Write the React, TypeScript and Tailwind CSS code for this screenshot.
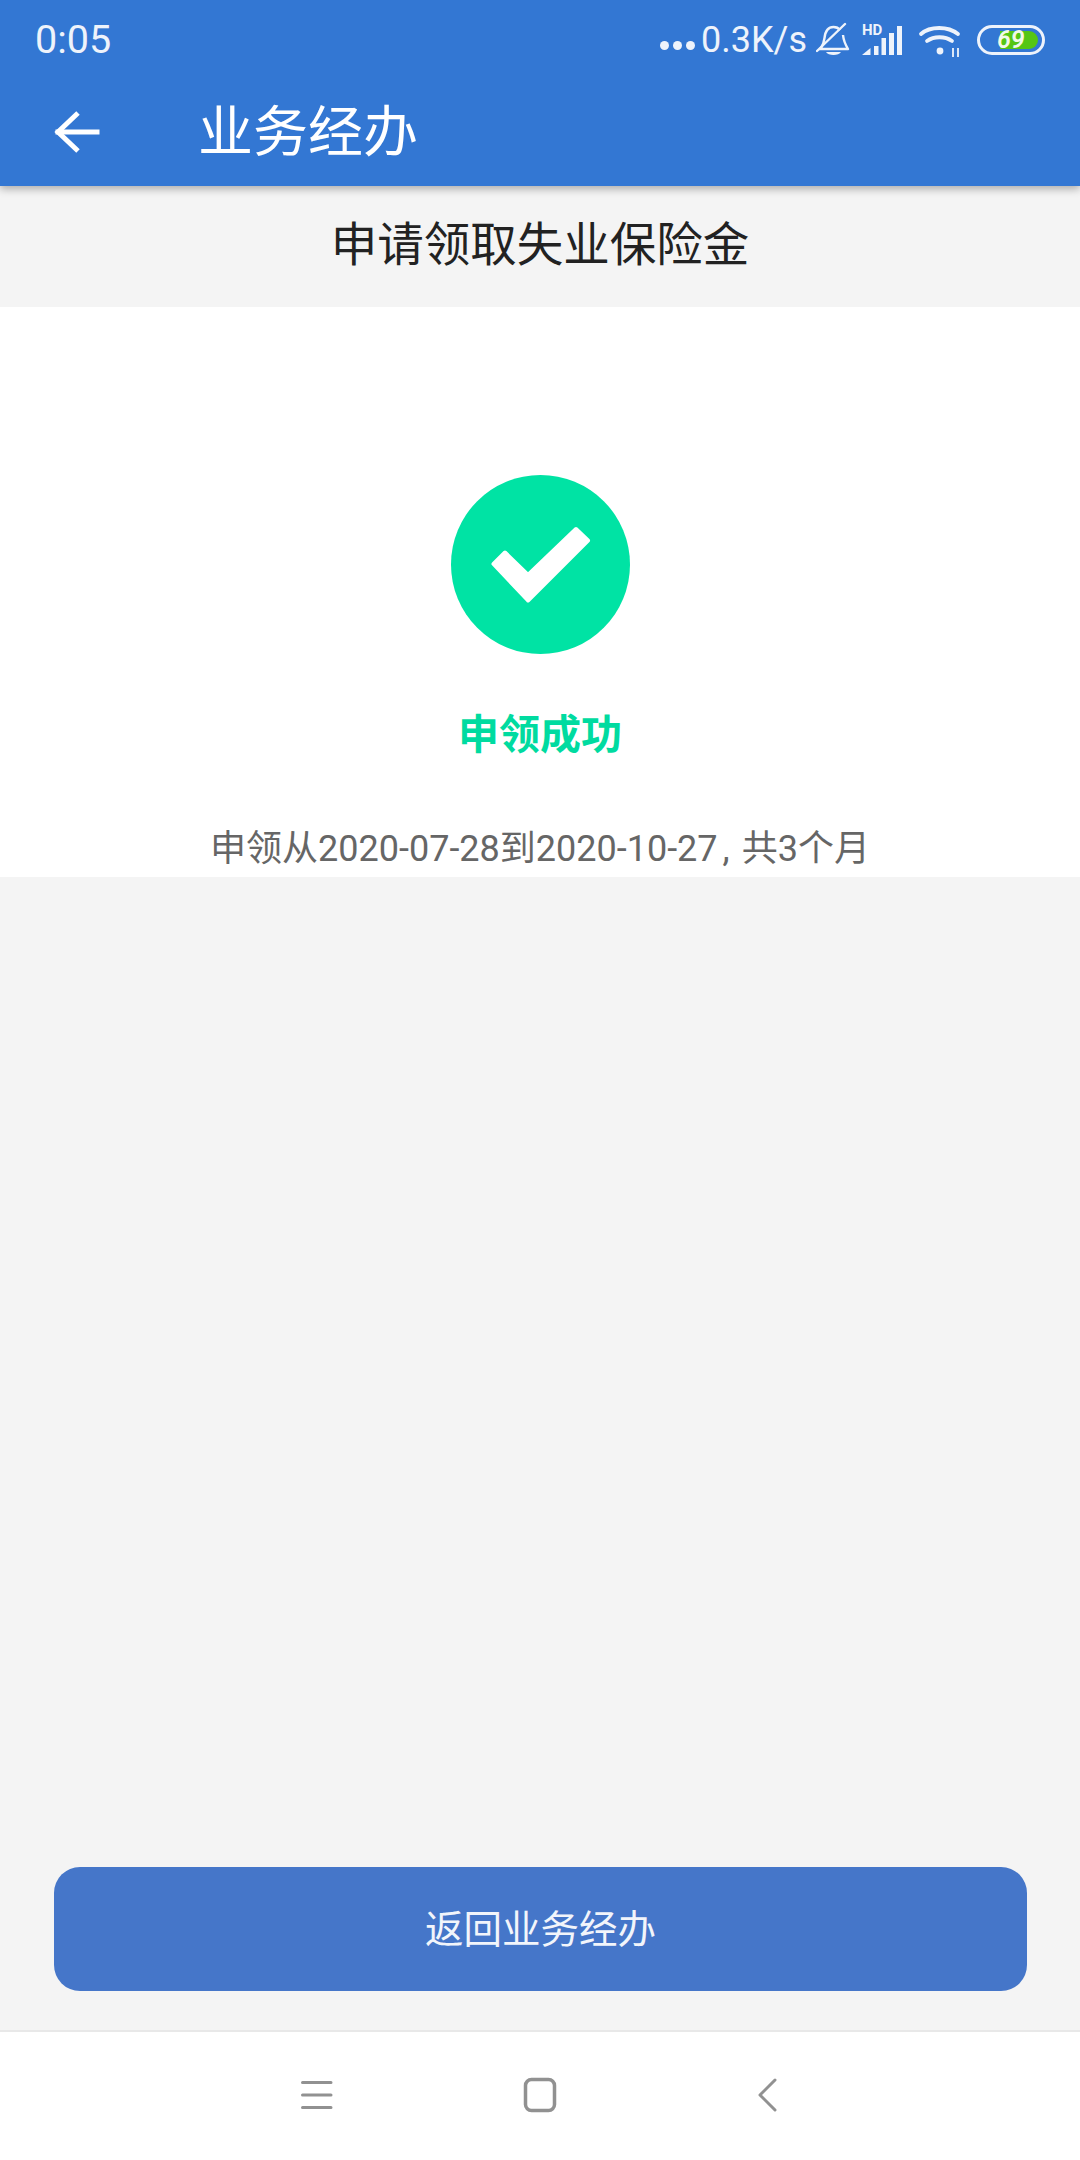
const cjk = "font-['Roboto','Noto_Sans_CJK_SC',sans-serif]";

function StatusBar() {
  return (
    <div className="flex h-[80px] items-center justify-between pl-[35px] pr-[35px] text-[#eef3fb]">
      <span className="text-[39.500px] leading-none">0:05</span>
      <div className="flex items-center">
        <div className="mr-[3px] mt-[10px] flex gap-[4px]">
          <span className="h-[9px] w-[9px] rounded-full bg-[#eef3fb]" />
          <span className="h-[9px] w-[9px] rounded-full bg-[#eef3fb]" />
          <span className="h-[9px] w-[9px] rounded-full bg-[#eef3fb]" />
        </div>
        <span className="ml-[3px] text-[36px] leading-none">0.3K/s</span>
        {/* muted bell */}
        <svg className="ml-[9px] h-[36px] w-[34px]" viewBox="0 0 34 36" fill="none" stroke="#eef3fb" strokeWidth="2.400">
          <path d="M5 26c2-3 3-6 3.500-10 .8-7 4-11 9-11 3 0 5 1 6.500 3M27 13c.5 5 2 9 5 14H3" strokeLinejoin="round" />
          <path d="M1 29 L29 2" strokeLinecap="round" />
          <path d="M10 30c2 4 13 4 15 0z" fill="#eef3fb" stroke="none" />
        </svg>
        {/* HD + signal */}
        <div className="relative ml-[12px] h-[32px] w-[41px]">
          <svg className="h-full w-full" viewBox="0 0 41 32" fill="#eef3fb">
            <path d="M0 31 L8.500 24 V31 Z" />
            <rect x="12" y="22" width="4.500" height="9" />
            <rect x="19.500" y="14" width="4.500" height="17" />
            <rect x="27" y="9" width="5" height="22" />
            <rect x="35" y="2" width="5" height="29" />
          </svg>
          <span className="absolute left-0 top-[-1px] text-[15px] font-bold leading-none">HD</span>
        </div>
        {/* wifi */}
        <svg className="ml-[15px] h-[34px] w-[44px]" viewBox="0 0 44 34" fill="none" stroke="#eef3fb" strokeWidth="3.800" strokeLinecap="round">
          <path d="M3 11C12 3 30 3 40 11" />
          <path d="M9 18c7-5 18-5 25 0" />
          <circle cx="22" cy="28" r="3.400" fill="#eef3fb" stroke="none" />
          <path d="M35 25v9M40 25v9" strokeWidth="1.800" strokeLinecap="butt" />
        </svg>
        {/* battery */}
        <div className="relative ml-[15px] flex h-[30px] w-[68px] items-center rounded-full border-[3px] border-[#eef3fb]">
          <div className="ml-[20px] h-[18px] w-[38px] rounded-r-full bg-[#55c614]" />
          <span className="absolute left-[17px] top-[-2px] text-[25px] font-semibold italic leading-[28px] text-[#f2f9e9]">69</span>
        </div>
      </div>
    </div>
  );
}

function Toolbar() {
  return (
    <div className="flex h-[106px] items-center pb-[2px] text-white">
      <svg className="ml-[54px] h-[46px] w-[46px]" viewBox="0 0 46 46" fill="none" stroke="white" strokeWidth="5" strokeLinecap="square">
        <path d="M43 23H4" />
        <path d="M24 4 L4 23 L24 42" strokeLinecap="butt" />
      </svg>
      <span className="ml-[98px] text-[55px] leading-none">业务经办</span>
    </div>
  );
}

function Check() {
  return (
    <svg className="h-[179px] w-[179px]" viewBox="0 0 179 179">
      <circle cx="89.500" cy="89.500" r="89.500" fill="#00e3a4" />
      <path
        d="M42.500 89 L54 77.500 L77 100 L125 54 L137 65.500 L77 125.500 Z"
        fill="white"
        stroke="white"
        strokeWidth="4"
        strokeLinejoin="round"
      />
    </svg>
  );
}

export default function App() {
  return (
    <div className={`flex h-[2160px] w-[1080px] flex-col overflow-hidden bg-[#f4f4f4] ${cjk}`}>
      <header className="relative z-10 h-[186px] bg-[#3377d3] shadow-[0_3px_8px_rgba(0,0,0,0.3)]">
        <StatusBar />
        <Toolbar />
      </header>

      <div className="flex h-[121px] items-center justify-center pb-[2px] text-[46.500px] leading-none text-[#222222]">
        申请领取失业保险金
      </div>

      <section className="flex h-[570px] flex-col items-center bg-white pt-[168px]">
        <Check />
        <p className="mt-[61px] text-[41px] font-bold leading-none text-[#00dba0]">申领成功</p>
        <p className="mt-[75px] whitespace-nowrap text-[36px] leading-none text-[#666666]">
          申领从2020-07-28到2020-10-27<span className="ml-[5px] mr-[12px]">,</span>共3个月
        </p>
      </section>

      <main className="flex flex-1 flex-col justify-end pb-[39px] pl-[54px] pr-[53px]">
        <button className="h-[124px] w-full rounded-[26px] bg-[#4576c9] pt-[2px] text-[38.500px] text-[#f2f5fb]">返回业务经办</button>
      </main>

      <nav className="flex h-[130px] items-center justify-center gap-[185px] border-t-2 border-[#e8e8e8] bg-white pb-[2px]">
        <svg className="h-10 w-10" viewBox="0 0 40 40" stroke="#919191" strokeWidth="3" strokeLinecap="round">
          <path d="M7.500 7.500H36M7.500 20H36M7.500 32.500H36" />
        </svg>
        <svg className="h-10 w-10" viewBox="0 0 40 40" fill="none" stroke="#919191" strokeWidth="3.500">
          <rect x="5.500" y="4.500" width="29" height="31" rx="6" />
        </svg>
        <svg className="h-10 w-10" viewBox="0 0 40 40" fill="none" stroke="#919191" strokeWidth="3" strokeLinecap="round" strokeLinejoin="round">
          <path d="M20 5 L5 20 L20 35" transform="translate(10 0)" />
        </svg>
      </nav>
    </div>
  );
}
